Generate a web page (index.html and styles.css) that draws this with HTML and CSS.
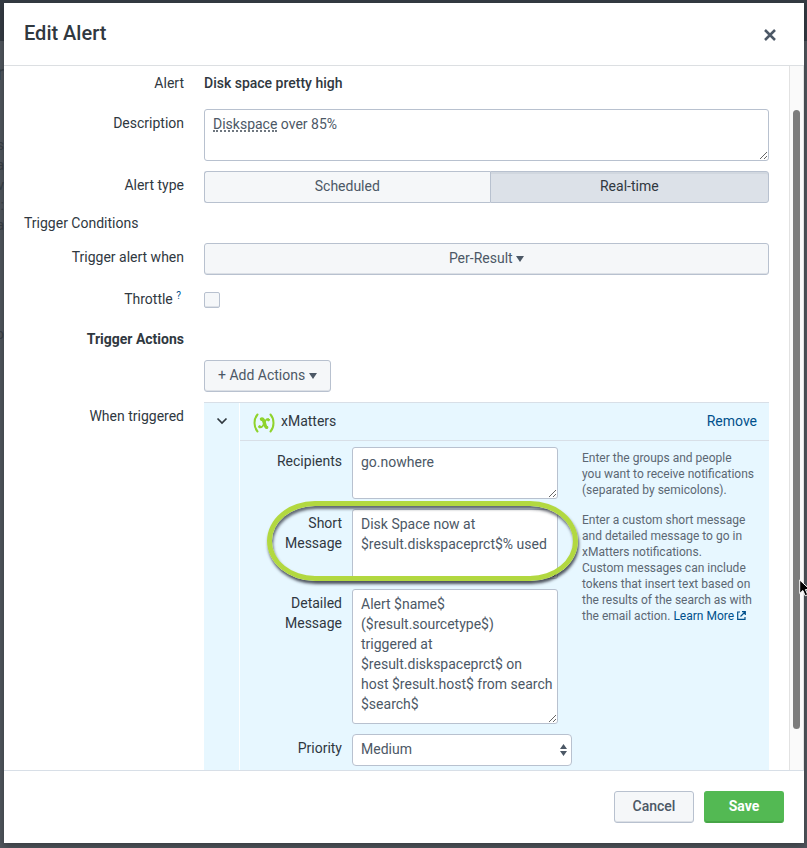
FILE: index.html
```html
<!DOCTYPE html>
<html lang="en">
<head>
<meta charset="utf-8">
<title>Edit Alert</title>
<meta name="viewport" content="width=device-width, initial-scale=1">
<link rel="stylesheet" href="styles.css">
</head>
<body>
<div class="page-behind" aria-hidden="true">
  <div class="page-bar"></div>
  <div class="page-text">
    <span class="page-title">r</span>
    <span>s</span><span>a</span><span>v</span><span>:</span><span>a</span>
    <span class="page-low">o</span>
  </div>
</div>

<form class="modal" role="dialog" aria-labelledby="title">
  <header class="modal-header">
    <h1 id="title">Edit Alert</h1>
    <button type="button" class="close" aria-label="Close">
      <svg width="12" height="12" viewBox="0 0 12 12"><path d="M1 1l10 10M11 1L1 11" fill="none" stroke="#4c5866" stroke-width="2.500"/></svg>
    </button>
  </header>

  <div class="modal-main">
    <div class="fields">
      <div class="row">
        <span class="label">Alert</span>
        <strong class="value">Disk space pretty high</strong>
      </div>
      <div class="row">
        <label class="label" for="desc">Description</label>
        <div class="spelled">
          <textarea id="desc" class="box short" spellcheck="false">Diskspace over 85%</textarea>
          <i class="squiggle"></i>
        </div>
      </div>
      <div class="row">
        <span class="label">Alert type</span>
        <div class="segments">
          <button type="button" class="btn scheduled">Scheduled</button>
          <button type="button" class="btn active" aria-pressed="true">Real-time</button>
        </div>
      </div>
      <h2 class="section">Trigger Conditions</h2>
      <div class="row">
        <span class="label">Trigger alert when</span>
        <button type="button" class="btn">Per-Result <i class="caret"></i></button>
      </div>
      <div class="row">
        <label class="label" for="throttle">Throttle <a class="hint" href="#throttle">?</a></label>
        <input id="throttle" class="check" type="checkbox">
      </div>
      <div class="row heading">
        <strong class="label">Trigger Actions</strong>
      </div>
      <div class="row">
        <span></span>
        <button type="button" class="btn add">+ Add Actions <i class="caret"></i></button>
      </div>
      <div class="row">
        <span class="label">When triggered</span>
        <section class="action">
          <button type="button" class="toggle" aria-label="Collapse">
            <svg width="12" height="8" viewBox="0 0 12 8"><path d="M1.500 1.500L6 6l4.500-4.500" fill="none" stroke="#30383f" stroke-width="1.700"/></svg>
          </button>
          <div class="action-content">
            <div class="action-head">
              <svg class="logo" width="22" height="20" viewBox="0 0 22 20" fill="none" stroke="#8fd32d" stroke-linecap="round">
                <path d="M4.500 1.500C.5 6 .5 14 4.500 18.500M17.500 1.500c4 4.500 4 12.500 0 17" stroke-width="2"/>
                <path d="M8.500 6.200c3-1.200 2.800 8 5.200 8.200" stroke-width="3.400"/>
                <path d="M15.500 6.500c-2.300-1.500-3.500 2-4.500 4.200s-2.400 4.500-4.600 3.300" stroke-width="1.700"/>
                <circle cx="15.300" cy="6.800" r="1.100" fill="#8fd32d"/><circle cx="6.700" cy="13.700" r="1.100" fill="#8fd32d"/>
              </svg>
              <span>xMatters</span>
              <a class="remove" href="#remove">Remove</a>
            </div>
            <div class="action-fields">
              <label class="label" for="recipients">Recipients</label>
              <textarea id="recipients" class="box short" spellcheck="false">go.nowhere</textarea>
              <p class="help">Enter the groups and people<br>you want to receive notifications<br>(separated by semicolons).</p>

              <label class="label" for="message">Short<br>Message</label>
              <div class="marked">
                <textarea id="message" class="box medium" spellcheck="false">Disk Space now at
$result.diskspaceprct$% used</textarea>
                <i class="ring"></i>
              </div>
              <p class="help tall">Enter a custom short message<br>and detailed message to go in<br>xMatters notifications.<br>Custom messages can include<br>tokens that insert text based on<br>the results of the search as with<br>the email action. <a href="#learn">Learn More <svg width="9" height="9" viewBox="0 0 9 9" fill="none" stroke="currentColor" stroke-width="1.200"><path d="M3 1H.7v7.300H8V6M5 .7h3.300V4M8 1L3.500 5.500"/></svg></a></p>

              <label class="label" for="detail">Detailed<br>Message</label>
              <textarea id="detail" class="box long" spellcheck="false">Alert $name$
($result.sourcetype$)
triggered at
$result.diskspaceprct$ on
host $result.host$ from search
$search$</textarea>

              <label class="label" for="priority">Priority</label>
              <div class="select">
                <select id="priority"><option>Low</option><option selected>Medium</option><option>High</option></select>
                <svg width="7" height="12" viewBox="0 0 7 12" fill="#4c5866"><path d="M0 5l3.500-5L7 5zM0 7h7l-3.500 5z"/></svg>
              </div>
            </div>
          </div>
        </section>
      </div>
    </div>
    <div class="scrollbar"><div class="thumb"></div></div>
  </div>

  <footer class="modal-footer">
    <button type="button" class="btn cancel">Cancel</button>
    <button type="submit" class="btn save">Save</button>
  </footer>
</form>

<svg class="pointer" width="12" height="19" viewBox="0 0 12 19" aria-hidden="true"><path d="M.7 1v13.500l3.200-3 2.300 5.300 2.500-1.100-2.300-5.100H11z" fill="#000" stroke="#fff"/></svg>
</body>
</html>
```
FILE: styles.css
```css
* { box-sizing: border-box; }

body {
  margin: 0;
  height: 100vh;
  padding: 3px 3px 5px 4px;
  overflow: hidden;
  background: #50565d;
  color: #30383f;
  font: 14px/20px Roboto, "Liberation Sans", sans-serif;
}

button, textarea, select { font: inherit; color: #4c5866; }
button { cursor: pointer; }
a { color: #00508c; text-decoration: none; }
h1, h2, p { margin: 0; }

.page-behind { position: absolute; inset: 0; z-index: -1; overflow: hidden; }
.page-bar { height: 41px; background: #343b43; }
.page-text {
  display: flex;
  flex-direction: column;
  align-items: flex-end;
  width: 4px;
  padding-top: 22px;
  color: #383f46;
}
.page-title { margin-bottom: 52px; font-size: 20px; }
.page-low { margin-top: 89px; }

.modal {
  display: flex;
  flex-direction: column;
  height: 100%;
  background: #fff;
  box-shadow: 0 3px 7px rgba(0, 0, 0, .3);
}

.modal-header {
  display: flex;
  align-items: center;
  justify-content: space-between;
  height: 63px;
  padding: 0 28px 2px 20px;
  border-bottom: 1px solid #dcdfe2;
}
.modal-header h1 { font-size: 20px; line-height: 24px; font-weight: 500; }
.close { display: flex; padding: 4px 0 0; border: 0; background: none; }

.modal-main { display: flex; flex: 1; min-height: 0; }
.fields {
  display: flex;
  flex: 1;
  flex-direction: column;
  gap: 10px;
  min-width: 0;
  padding: 3px 20px 0;
  overflow: hidden;
}
.row {
  display: grid;
  flex: none;
  grid-template-columns: 160px minmax(0, 1fr);
  column-gap: 20px;
  min-height: 30px;
}
.heading { min-height: 25px; }
.label { padding-top: 4px; text-align: right; }
.value { padding-top: 4px; font-weight: 500; }
.section { font-size: 14px; line-height: 20px; font-weight: 400; }
.hint { padding-right: 3px; font-size: 10px; line-height: 10px; vertical-align: 5px; }

.box {
  display: block;
  width: 100%;
  padding: 4px 8px;
  border: 1px solid #b8c1cf;
  border-radius: 3px;
  background: #fff;
  overflow: hidden;
  resize: vertical;
}
.short { height: 52px; }
.medium { height: 70px; }
.long { height: 135px; white-space: pre; }

.spelled, .marked { position: relative; }
.squiggle {
  position: absolute;
  top: 21px;
  left: 9px;
  width: 64px;
  border-top: 2px dotted #6f7780;
}

.btn {
  height: 32px;
  padding: 0 13px 2px;
  border: 1px solid #b8c1cf;
  border-radius: 3px;
  background: #f5f7f9;
  box-shadow: inset 0 -1px #dce0e6;
}
.segments { display: flex; }
.segments .btn { flex: 279; border-radius: 0 3px 3px 0; }
.segments .scheduled { flex: 287; border-right: 0; border-radius: 3px 0 0 3px; box-shadow: none; }
.segments .active { background: #dce1e8; color: #30383f; box-shadow: inset 0 2px #d1d7df; }
.add { justify-self: start; }
.caret {
  display: inline-block;
  border: solid transparent;
  border-width: 6px 4px 0;
  border-top-color: #4c5866;
  vertical-align: 1px;
}
.check {
  appearance: none;
  width: 16px;
  height: 16px;
  margin: 7px 0 0;
  border: 1px solid #b8c1cf;
  border-radius: 2px;
  background: #f5f7f9;
  box-shadow: inset 0 -1px #dce0e6;
}

.action {
  display: flex;
  border-top: 1px solid #d8dfe7;
  background: #e7f7ff;
}
.toggle {
  display: flex;
  justify-content: center;
  width: 36px;
  padding: 14px 0 0;
  border: 0;
  border-right: 1px solid #fff;
  background: none;
}
.action-content { flex: 1; min-width: 0; }
.action-head {
  display: flex;
  align-items: center;
  gap: 6px;
  height: 38px;
  padding: 0 12px 2px 13px;
  border-bottom: 1px solid #d8dfe7;
}
.logo { margin-top: 4px; }
.remove { margin-left: auto; }
.action-fields {
  display: grid;
  grid-template-columns: 102px 206px minmax(0, 1fr);
  gap: 10px;
  padding: 6px 0 24px;
}
.help {
  padding: 3px 0 0 14px;
  color: #5c6773;
  font-size: 12px;
  line-height: 16px;
  white-space: nowrap;
}
.tall { grid-row: 2 / span 2; grid-column: 3; }
.ring {
  position: absolute;
  top: -8px;
  left: -85px;
  width: 311px;
  height: 80px;
  border: 5px solid #b2d840;
  border-radius: 48px / 40px;
  box-shadow: 1px 3px 3px rgba(40, 44, 55, .8), inset 1px 3px 3px rgba(40, 44, 55, .7);
  pointer-events: none;
}
.select { position: relative; grid-column: 2 / span 2; width: 220px; }
.select select {
  appearance: none;
  width: 100%;
  height: 32px;
  padding: 0 8px 2px;
  border: 1px solid #b8c1cf;
  border-radius: 4px;
  background: #fff;
}
.select svg { position: absolute; top: 10px; right: 5px; pointer-events: none; }

.scrollbar {
  display: flex;
  width: 15px;
  padding: 44px 3px 41px;
  border: solid #e2e2e2;
  border-width: 0 1px;
  background: #fafafa;
}
.thumb { flex: 1; border-radius: 4px; background: #7d7d7d; }

.modal-footer {
  display: flex;
  justify-content: flex-end;
  gap: 10px;
  height: 73px;
  padding: 20px;
  border-top: 1px solid #d8dfe7;
}
.modal-footer .btn { width: 80px; font-weight: 500; }
.modal-footer .save {
  border-color: #53b953;
  border-bottom-color: #46a546;
  background: #53b953;
  box-shadow: inset 0 -1px #46a546;
  color: #fff;
  font-weight: 700;
}

.pointer { position: absolute; top: 579px; right: -4px; }
```
